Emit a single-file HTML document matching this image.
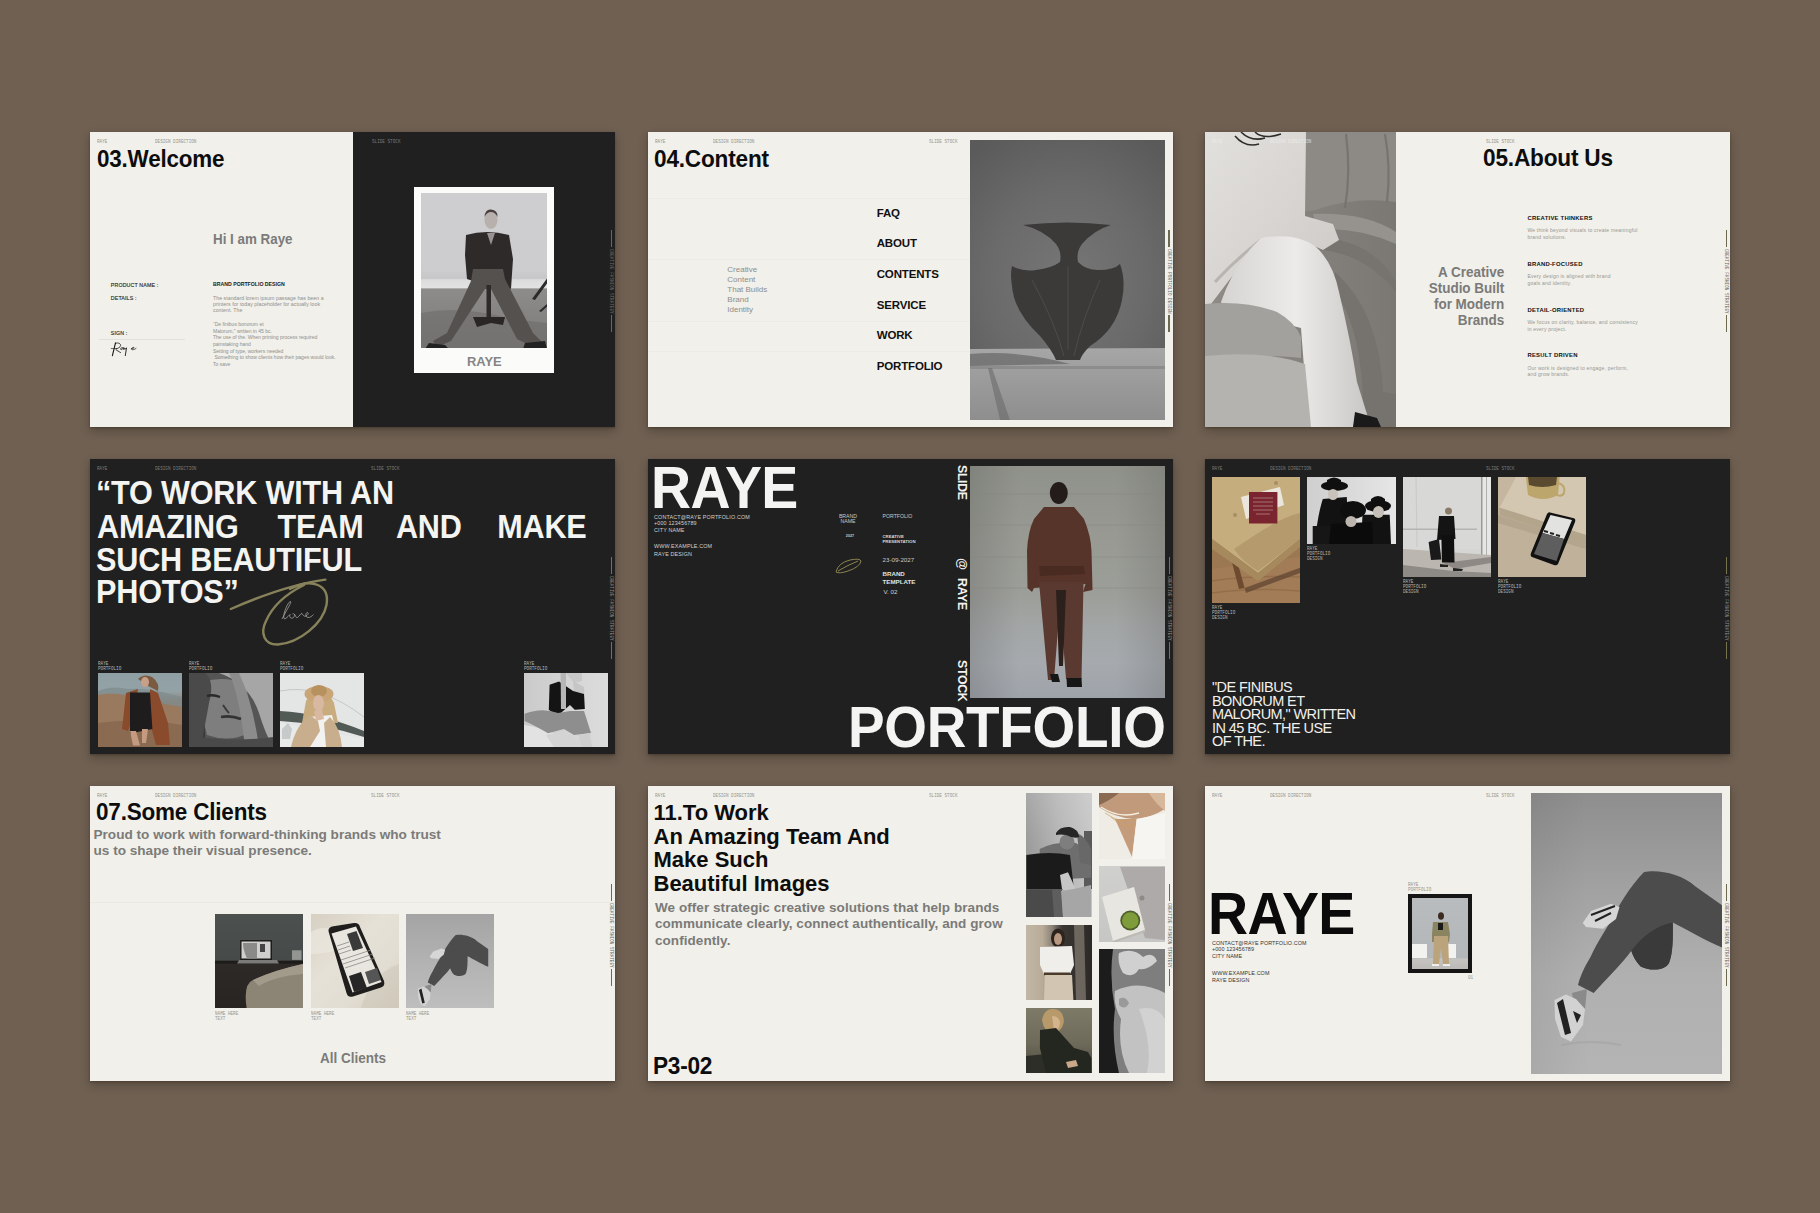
<!DOCTYPE html>
<html><head><meta charset="utf-8">
<style>
html,body{margin:0;padding:0;}
body{width:1820px;height:1213px;background:#6f6052;position:relative;overflow:hidden;font-family:"Liberation Sans",sans-serif;}
.s{position:absolute;width:525px;height:295px;overflow:hidden;box-shadow:0 4px 9px rgba(35,25,15,.32),0 1px 2px rgba(35,25,15,.3);}
.l{background:#f1f0ea;}
.d{background:#202020;}
.a{position:absolute;white-space:nowrap;}
.hd{position:absolute;top:8.2px;font-family:"Liberation Mono",monospace;font-size:5.4px;line-height:5.4px;color:#96968f;transform:scaleX(.8);transform-origin:0 0;}
.d .hd{color:#7a7a76;}
.b{font-weight:bold;}
.cn{transform:scaleX(.945);transform-origin:0 0;}
.ph{position:absolute;overflow:hidden;}
.sb{position:absolute;left:518px;top:98px;width:7px;height:102px;}
.sb i{position:absolute;left:2.7px;width:1.5px;height:17px;background:#77734f;}
.sb span{position:absolute;left:0.3px;top:18.5px;writing-mode:vertical-rl;font-family:"Liberation Mono",monospace;font-size:5.6px;line-height:6px;color:#8a8a86;white-space:nowrap;transform:scaleY(.77);transform-origin:0 0;}
.l .sb i{background:#6d6850;}
.l .sb span{color:#6a6a66;}
</style></head><body>
<!-- SLIDE 1 -->
<div class="s l" style="left:90px;top:132px">
  <div class="hd" style="left:7px">RAYE</div>
  <div class="hd" style="left:65px">DESIGN DIRECTION</div>
  <div class="a b" id="t1" style="left:6.8px;top:14.6px;font-size:24.1px;letter-spacing:-0.2px;line-height:1;color:#0d0d0d;transform:scaleX(.93);transform-origin:0 0">03.Welcome</div>
  <div class="a b" style="left:123px;top:100.4px;font-size:14px;line-height:1;color:#7b7b7b;transform:scaleX(.955);transform-origin:0 0">Hi I am Raye</div>
  <div class="a" style="left:20.8px;top:150.8px;font-size:5.3px;letter-spacing:.12px;line-height:1;color:#2e2e2e;-webkit-text-stroke:.15px #2e2e2e">PRODUCT NAME :</div>
  <div class="a" style="left:20.8px;top:163.9px;font-size:5.3px;letter-spacing:.12px;line-height:1;color:#2e2e2e;-webkit-text-stroke:.15px #2e2e2e">DETAILS :</div>
  <div class="a" style="left:20.8px;top:199.3px;font-size:5.3px;letter-spacing:.12px;line-height:1;color:#2e2e2e;-webkit-text-stroke:.15px #2e2e2e">SIGN :</div>
  <div class="a" style="left:9px;top:207px;width:86px;height:0.5px;background:#e3e1da"></div>
  <svg class="a" style="left:0;top:0" width="60" height="230" viewBox="0 0 60 230"><g fill="none" stroke="#161616" stroke-linecap="round" stroke-linejoin="round">
    <path d="M25.5 210.8 L22.4 223.6" stroke-width="1.1"/>
    <path d="M25.3 211.6 C 27 210.4, 30.5 210.8, 30.6 213.4 C 30.5 215.2, 28 216.6, 25.8 216.9" stroke-width=".8"/>
    <path d="M21.2 216.5 L26.8 216.7" stroke-width=".6"/>
    <path d="M26.3 218 L30.6 220.6" stroke-width=".8"/>
    <path d="M32.6 215.7 C 31 215.2, 30 217.2, 31 217.6 C 32 217.9, 33 216.6, 33.5 215.6 L33.8 217.6" stroke-width=".8"/>
    <path d="M34.1 216 C 34 217.6, 35.6 217.6, 36.5 215.8 L35.3 223.6" stroke-width=".9"/>
    <path d="M41.3 216.9 C 43 216.6, 44.5 216, 44 215.5 C 43 215, 41.4 216, 41.5 217.1 C 42 218.1, 44 217.9, 46 216.5" stroke-width=".7"/>
  </g></svg>
  <div class="a b" style="left:123px;top:149.5px;font-size:5.2px;line-height:1;color:#1a1a1a">BRAND PORTFOLIO DESIGN</div>
  <div class="a" style="left:123px;top:162.8px;font-size:5.2px;letter-spacing:.05px;line-height:6.2px;color:#8f8f8c">The standard lorem ipsum passage has been a<br>printers for today placeholder for actually look<br>content. The</div>
  <div class="a" style="left:123px;top:189.4px;font-size:5px;line-height:6.55px;color:#8f8f8c">“De finibus bonorum et<br>Malorum,” written in 45 bc.<br>The use of the. When printing process required<br>painstaking hand<br>Setting of type, workers needed<br>&nbsp;Something to show clients how their pages would look.<br>To save</div>
  <div class="a d" style="left:263px;top:0;width:262px;height:295px;background:#202020"></div>
  <div class="hd" style="left:282px;color:#7a7a76">SLIDE STOCK</div>
  <div class="a" style="left:324px;top:54.6px;width:140px;height:186px;background:#fbfbfa"></div>
  <div class="ph" style="left:330.7px;top:61.2px;width:126.4px;height:155.3px;background:linear-gradient(180deg,#d2d1d4 0%,#cfced1 50%,#c6c5c8 55%,#dcdcdc 56%,#e2e2e2 61%,#8e8c8b 62%,#7c7a79 100%)">
    <svg width="127" height="156" viewBox="0 0 127 156" preserveAspectRatio="none">
      <rect x="0" y="0" width="127" height="86" fill="#c9c8cb" opacity=".35"/>
      <path d="M0 120 Q40 112 90 126 L127 130 L127 156 L0 156 Z" fill="#6e6c6b" opacity=".6"/>
      <path d="M111 106 L127 84 L127 89 L114 107 Z M118 118 L127 110 L127 113 L120 119 Z" fill="#2c2a2a"/>
      <ellipse cx="70" cy="27" rx="6.5" ry="9" fill="#b8b0ac"/>
      <path d="M63.5 24 Q64 16 70 16.5 Q77 17 76.5 24 Q74 19 70 19 Q66 19 63.5 24 Z" fill="#4a4040"/>
      <path d="M45 42 Q66 36 88 42 L92 66 L90 96 L80 92 L78 78 L56 78 L52 88 L46 86 L44 62 Z" fill="#2e2a2a"/>
      <path d="M66 40 L70 52 L74 40 Z" fill="#9a9290"/>
      <path d="M52 76 L82 76 L84 86 L112 140 L122 150 L110 153 L96 146 L70 96 L64 96 L30 148 L16 154 L12 148 L26 140 L50 88 Z" fill="#55514f"/>
      <rect x="65.5" y="92" width="4.5" height="32" fill="#2e2a2a"/>
      <path d="M52 124 L84 124 L82 132 L70 130 L56 134 Z" fill="#2a2626"/>
      <path d="M8 150 L24 152 L28 156 L4 156 Z M104 150 L124 148 L126 156 L102 156 Z" fill="#222"/>
    </svg>
  </div>
  <div class="a b cn" style="left:376.5px;top:223.4px;font-size:13.7px;line-height:1;color:#858585">RAYE</div>
  <div class="sb"><i style="top:0"></i><span>CREATIVE FASHION STRATEGY</span><i style="top:85px"></i></div>
</div>
<!-- SLIDE 2 -->
<div class="s l" style="left:648px;top:132px">
  <div class="hd" style="left:7px">RAYE</div>
  <div class="hd" style="left:65px">DESIGN DIRECTION</div>
  <div class="hd" style="left:281px">SLIDE STOCK</div>
  <div class="a b" style="left:6.3px;top:15.6px;font-size:23.6px;letter-spacing:-0.2px;line-height:1;color:#0d0d0d;transform:scaleX(.958);transform-origin:0 0">04.Content</div>
  <div class="a" style="left:0;top:66px;width:322px;height:1px;background:#ecebe4"></div>
  <div class="a" style="left:0;top:127px;width:322px;height:1px;background:#ecebe4"></div>
  <div class="a" style="left:0;top:188.5px;width:322px;height:1px;background:#ecebe4"></div>
  <div class="a" style="left:0;top:219px;width:322px;height:1px;background:#ecebe4"></div>
  <div class="a" style="left:79.3px;top:133px;font-size:8px;line-height:9.9px;color:#8e8e8b">Creative<br>Content<br>That Builds<br>Brand<br>Identity</div>
  <div class="a b" style="left:228.7px;top:65.5px;font-size:11.5px;letter-spacing:-0.15px;line-height:30.7px;color:#111">FAQ<br>ABOUT<br>CONTENTS<br>SERVICE<br>WORK<br>PORTFOLIO</div>
  <div class="ph" style="left:322px;top:8px;width:195px;height:279.5px;background:radial-gradient(ellipse 75% 60% at 50% 50%,#767676 0%,#6a6a6a 55%,#5a5a5a 100%)">
    <svg width="195" height="280" viewBox="0 0 195 280">
      <defs><linearGradient id="tb" x1="0" y1="0" x2="0" y2="1"><stop offset="0" stop-color="#a6a6a6"/><stop offset="1" stop-color="#8e8e8e"/></linearGradient></defs>
      <path d="M0 209 L195 208 L195 280 L0 280 Z" fill="url(#tb)"/>
      <path d="M0 226 L195 226 L195 229 L0 229 Z" fill="#7a7a7a" opacity=".5"/>
      <path d="M18 228 L30 280 L40 280 L22 228 Z" fill="#6a6a6a" opacity=".6"/>
      <path d="M0 214 Q50 210 100 224 L0 226 Z" fill="#555" opacity=".55"/>
      <path d="M53 85 Q97 80 141 85 Q124 90 112 104 Q106 112 108 122 Q116 130 128 130 Q144 130 150 124 Q156 140 152 160 Q146 190 120 206 Q112 214 110 220 L86 220 Q82 210 70 196 Q44 172 42 146 Q40 134 42 126 Q52 132 66 130 Q82 128 90 122 Q92 112 86 104 Q74 90 53 85 Z" fill="#3b3a39"/>
      <path d="M62 140 Q84 180 94 216 M130 140 Q112 180 104 216 M98 126 L98 210" stroke="#5a5a58" stroke-width=".8" fill="none" opacity=".7"/>
    </svg>
  </div>
  <div class="sb" style="left:517.5px"><i style="top:0"></i><span>CREATIVE PORTFOLIO DESIGN</span><i style="top:85px"></i></div>
</div>
<!-- SLIDE 3 -->
<div class="s l" style="left:1205px;top:132px">
  <div class="ph" style="left:0;top:0;width:191px;height:295px;background:#86837e">
    <svg width="191" height="295" viewBox="0 0 191 295">
      <defs>
        <linearGradient id="sofa3" x1="0" y1="0" x2="1" y2="0"><stop offset="0" stop-color="#8e8b86"/><stop offset=".5" stop-color="#85827d"/><stop offset="1" stop-color="#7b7873"/></linearGradient>
        <linearGradient id="swt3" x1="0" y1="0" x2="1" y2="1"><stop offset="0" stop-color="#e2e0dd"/><stop offset="1" stop-color="#cdcac6"/></linearGradient>
        <linearGradient id="pnt3" x1="0" y1="0" x2="1" y2="0"><stop offset="0" stop-color="#d6d4d2"/><stop offset=".5" stop-color="#ecebea"/><stop offset="1" stop-color="#c8c6c4"/></linearGradient>
      </defs>
      <rect width="191" height="295" fill="url(#sofa3)"/>
      <path d="M96 0 L191 0 L191 70 Q150 64 110 78 L96 80 Z" fill="#8d8a85"/>
      <path d="M141 2 Q146 40 140 76 M180 2 Q186 36 182 70" stroke="#77746f" stroke-width="2.2" fill="none"/>
      <path d="M108 82 Q160 80 191 100 L191 112 Q150 94 112 98 Z" fill="#96938e"/>
      <path d="M112 104 Q170 110 191 150 L191 160 Q160 122 116 118 Z" fill="#77746f"/>
      <path d="M130 140 Q175 180 178 260 L191 262 L191 295 L158 295 Q160 200 130 160 Z" fill="#76736e"/>
      <path d="M0 0 L101 0 L100 84 L128 92 L134 108 L118 118 L96 108 Q70 116 56 108 Q30 140 6 172 L0 172 Z" fill="url(#swt3)"/>
      <path d="M10 150 Q30 128 56 108" stroke="#b8b5b0" stroke-width="3" fill="none"/>
      <path d="M56 106 Q90 100 110 114 Q128 130 134 160 Q146 210 152 250 L166 295 L104 295 Q100 250 96 196 Q70 190 40 180 Q18 176 16 170 Q30 130 56 106 Z" fill="url(#pnt3)"/>
      <path d="M0 172 Q40 168 72 180 Q90 190 96 205 L96 226 Q60 222 0 226 Z" fill="#a3a19d"/>
      <path d="M0 224 Q60 218 100 232 L106 295 L0 295 Z" fill="#b5b3af"/>
      <path d="M30 4 Q40 16 54 12 M36 0 Q46 10 60 6 M50 0 Q58 8 76 2" stroke="#2e2c2a" stroke-width="1.6" fill="none"/>
      <path d="M150 280 L172 286 L176 295 L148 295 Z" fill="#1a1a1a"/>
    </svg>
  </div>
  <div class="hd" style="left:7px;color:#f2f2f0;opacity:.7">RAYE</div>
  <div class="hd" style="left:65px;color:#f2f2f0;opacity:.7">DESIGN DIRECTION</div>
  <div class="hd" style="left:281px">SLIDE STOCK</div>
  <div class="a b" style="left:278.3px;top:14.9px;font-size:23.6px;letter-spacing:-0.2px;line-height:1;color:#0d0d0d;transform:scaleX(.959);transform-origin:0 0">05.About Us</div>
  <div class="a b" style="left:150px;top:131.7px;width:149.3px;text-align:right;font-size:14.2px;line-height:16.15px;color:#7a7a78;white-space:normal;transform:scaleX(.95);transform-origin:100% 0">A Creative<br>Studio Built<br>for Modern<br>Brands</div>
  <div class="a b" style="left:322.4px;top:83.8px;font-size:5.9px;letter-spacing:.25px;line-height:1;color:#111">CREATIVE THINKERS</div>
  <div class="a" style="left:322.4px;top:95.4px;font-size:5px;letter-spacing:.22px;line-height:6.7px;color:#979794">We think beyond visuals to create meaningful<br>brand solutions.</div>
  <div class="a b" style="left:322.4px;top:129.8px;font-size:5.9px;letter-spacing:.25px;line-height:1;color:#111">BRAND-FOCUSED</div>
  <div class="a" style="left:322.4px;top:141.4px;font-size:5px;letter-spacing:.22px;line-height:6.7px;color:#979794">Every design is aligned with brand<br>goals and identity.</div>
  <div class="a b" style="left:322.4px;top:175.5px;font-size:5.9px;letter-spacing:.25px;line-height:1;color:#111">DETAIL-ORIENTED</div>
  <div class="a" style="left:322.4px;top:187.4px;font-size:5px;letter-spacing:.22px;line-height:6.7px;color:#979794">We focus on clarity, balance, and consistency<br>in every project.</div>
  <div class="a b" style="left:322.4px;top:221px;font-size:5.9px;letter-spacing:.25px;line-height:1;color:#111">RESULT DRIVEN</div>
  <div class="a" style="left:322.4px;top:232.6px;font-size:5px;letter-spacing:.22px;line-height:6.7px;color:#979794">Our work is designed to engage, perform,<br>and grow brands.</div>
  <div class="sb" style="left:518px"><i style="top:0"></i><span>CREATIVE FASHION STRATEGY</span><i style="top:85px"></i></div>
</div>
<!-- SLIDE 4 -->
<div class="s d" style="left:90px;top:459px">
  <div class="hd" style="left:7px">RAYE</div>
  <div class="hd" style="left:65px">DESIGN DIRECTION</div>
  <div class="hd" style="left:281px">SLIDE STOCK</div>
  <div class="a b cn" style="left:6px;top:18.4px;font-size:32.4px;letter-spacing:-0.2px;line-height:1;color:#f4f4f2">“TO WORK WITH AN</div>
  <div class="a b" style="left:6.5px;top:51.6px;width:490px;font-size:32.4px;letter-spacing:-0.2px;line-height:1;color:#f4f4f2;display:flex;justify-content:space-between"><span style="transform:scaleX(.945);transform-origin:0 0">AMAZING</span><span style="transform:scaleX(.945);transform-origin:50% 0">TEAM</span><span style="transform:scaleX(.945);transform-origin:50% 0">AND</span><span style="transform:scaleX(.945);transform-origin:100% 0">MAKE</span></div>
  <div class="a b cn" style="left:6px;top:84.9px;font-size:32.4px;letter-spacing:-0.2px;line-height:1;color:#f4f4f2">SUCH BEAUTIFUL</div>
  <div class="a b cn" style="left:6px;top:117.4px;font-size:32.4px;letter-spacing:-0.2px;line-height:1;color:#f4f4f2">PHOTOS”</div>
  <svg class="a" style="left:130px;top:110px" width="120" height="85" viewBox="0 0 120 85">
    <path d="M10.8 40 C 45 25, 80 14, 105.4 10.6" stroke="#87825a" stroke-width="2.4" fill="none" stroke-linecap="round"/>
    <path d="M70 20 C 92 8, 110 16, 106.5 36 C 103 54, 80 74, 58 75.5 C 44 76, 40 64, 46 52 C 52 38, 64 26, 84 16" stroke="#87825a" stroke-width="2.4" fill="none" stroke-linecap="round"/>
    <path d="M62 50 C 66 42, 72 33, 70.5 32.5 C 68.5 32, 63 44, 63.8 49 C 64.5 51.5, 68 47.5, 70 45.5 C 69 48, 71 50.5, 73.5 48.5 C 75.5 46.5, 74.5 44, 72.5 45 M74.5 45.5 C 76 46, 75.5 49.5, 77.5 48.5 C 79.5 47, 80.5 44.5, 82 44.5 C 83 46, 84 48, 86 47 C 88 46, 89 44, 87.5 43.5 C 85.5 43.5, 85 48, 88 48.5 C 90 48.8, 92 47, 93.5 45.5" stroke="#b4b4b0" stroke-width=".7" fill="none"/>
  </svg>
  <div class="hd" style="left:8px;top:202.9px;color:#b4b4b0">RAYE</div><div class="hd" style="left:8px;top:208px;color:#b4b4b0">PORTFOLIO</div>
  <div class="hd" style="left:99px;top:202.9px;color:#b4b4b0">RAYE</div><div class="hd" style="left:99px;top:208px;color:#b4b4b0">PORTFOLIO</div>
  <div class="hd" style="left:190.4px;top:202.9px;color:#b4b4b0">RAYE</div><div class="hd" style="left:190.4px;top:208px;color:#b4b4b0">PORTFOLIO</div>
  <div class="hd" style="left:433.5px;top:202.9px;color:#b4b4b0">RAYE</div><div class="hd" style="left:433.5px;top:208px;color:#b4b4b0">PORTFOLIO</div>
  <div class="ph" style="left:8px;top:214px;width:84px;height:74px;background:linear-gradient(180deg,#8fa0a5 0%,#93a2a5 25%,#94857a 38%,#9c7c62 55%,#8a6a52 100%)">
    <svg width="84" height="74" viewBox="0 0 84 74">
      <path d="M0 18 Q14 12 30 16 Q50 14 84 24 L84 34 L0 28 Z" fill="#7e8a8c" opacity=".7"/>
      <path d="M0 22 Q20 18 40 26 Q60 30 84 34 L84 74 L0 74 Z" fill="#9a7a5e"/>
      <path d="M0 50 Q40 44 84 52 L84 74 L0 74 Z" fill="#86664c" opacity=".8"/>
      <path d="M40 6 Q46 0 54 4 Q62 10 60 18 L52 14 Z" fill="#7a5a40"/>
      <ellipse cx="47" cy="9" rx="4" ry="5" fill="#c8a088"/>
      <path d="M28 20 L40 16 L36 40 L30 58 L24 56 Z" fill="#8a4a2c"/>
      <path d="M52 16 L60 20 L70 50 L72 72 L58 72 L52 50 Z" fill="#8a4a2c"/>
      <path d="M32 19.6 L52 19.6 L54.4 56 L32 60.4 Z" fill="#1e1c1c"/>
      <path d="M32 58 L38 58 L42 72.5 L35 72.5 Z M44 56 L50 56 L48 70 L44 70 Z" fill="#c49a80"/>
    </svg>
  </div>
  <div class="ph" style="left:99px;top:214px;width:84px;height:74px;background:#555">
    <svg width="84" height="74" viewBox="0 0 84 74">
      <rect x="0" y="0" width="16" height="74" fill="#3a3a3a"/>
      <path d="M14 9 Q36 2 58 12 L60 60 Q40 70 18 62 Q10 36 14 9 Z" fill="#7e7e7e"/>
      <path d="M30 0 Q60 10 70 40 Q76 60 84 74 L84 0 Z" fill="#a6a6a6"/>
      <path d="M40 0 Q50 20 56 74 L70 74 Q64 30 50 0 Z" fill="#8c8c8c"/>
      <path d="M16 0 Q26 8 20 30 L12 74 L0 74 L0 0 Z" fill="#4a4a4a"/>
      <path d="M18 23 Q24 21 31 24" stroke="#2a2a2a" stroke-width="2.4" fill="none"/>
      <path d="M34 32 Q38 38 40 40" stroke="#3a3a3a" stroke-width="2" fill="none"/>
      <path d="M32 44 Q42 42 52 46" stroke="#333" stroke-width="2.6" fill="none"/>
      <path d="M0 62 Q40 70 84 64 L84 74 L0 74 Z" fill="#4a4a4a"/>
    </svg>
  </div>
  <div class="ph" style="left:190.4px;top:214px;width:84px;height:74px;background:#e4e6e6">
    <svg width="84" height="74" viewBox="0 0 84 74">
      <path d="M0 18 Q40 10 84 44" stroke="#c4c8c6" stroke-width="1" fill="none"/>
      <path d="M0 38 Q40 40 84 58 L84 64 Q40 50 0 48 Z" fill="#525a56"/>
      <path d="M0 50 L84 66 L84 74 L0 74 Z" fill="#e8eaea"/>
      <path d="M2 56 L8 50 L12 56 L10 66 L2 66 Z" fill="#b8bcbc" opacity=".7"/>
      <path d="M26 28 Q30 20 40 21 Q52 22 54 30 L58 50 L22 50 Z" fill="#c9ac7e"/>
      <ellipse cx="39" cy="21" rx="14.5" ry="8" fill="#c9a578"/>
      <ellipse cx="39" cy="18" rx="8" ry="6" fill="#b8925e"/>
      <ellipse cx="38.5" cy="30" rx="5.5" ry="8" fill="#d8b8a0"/>
      <path d="M28 44 L52 42 L60 74 L24 74 Z" fill="#f2f2f0"/>
      <path d="M11 74 Q16 52 30 42 L38 48 L40 58 L30 74 Z" fill="#c8ae8c"/>
      <path d="M62 74 Q60 54 50 44 L44 50 L46 74 Z" fill="#c8ae8c"/>
      <path d="M34 38 L42 36 L44 46 L36 48 Z" fill="#d8b8a0"/>
    </svg>
  </div>
  <div class="ph" style="left:433.5px;top:214px;width:84px;height:74px;background:linear-gradient(90deg,#cacaca 0%,#d6d6d6 60%,#dcdcdc 100%)">
    <svg width="84" height="74" viewBox="0 0 84 74">
      <path d="M0 52 Q30 56 50 74 L0 74 Z" fill="#e2e2e2"/>
      <path d="M42 0 L58 0 L58 8 L50 10 Z" fill="#c8c8c8"/>
      <path d="M49 8 L60 14 L61 36 L51 37 Z" fill="#c6c6c6"/>
      <path d="M25.6 11.7 L35 8.6 L49.1 18 L60 21.1 L60.8 36 L50.7 36.8 L46 32 L33.4 43 L24.8 36.8 Z" fill="#141414"/>
      <path d="M36.6 0 L42 0 L42 36 L37 36 Z" fill="#b6b6b6"/>
      <path d="M0.5 40.7 Q18 34 34 40 L46 38 L60 38 L67 60 L50 62 L40 56 L24 60.3 Q10 52 0.5 48 Z" fill="#8e8e8e"/>
      <path d="M22 62 L40 58 L58 70 L62 74 L30 74 Z" fill="#d4d4d4"/>
      <path d="M54 62 L66 60 L68 74 L58 74 Z" fill="#cfcfcf"/>
    </svg>
  </div>
  <div class="sb"><i style="top:0"></i><span>CREATIVE FASHION STRATEGY</span><i style="top:85px"></i></div>
</div>
<!-- SLIDE 5 -->
<div class="s d" style="left:648px;top:459px">
  <div class="a b cn" style="left:2.5px;top:-0.4px;font-size:58.7px;letter-spacing:-0.6px;line-height:1;color:#f4f4f2">RAYE</div>
  <div class="a" style="left:6px;top:54.5px;font-size:5.4px;letter-spacing:.15px;line-height:6.5px;color:#d2d2d0">CONTACT@RAYE PORTFOLIO.COM<br>+000 123456789<br>CITY NAME</div>
  <div class="a" style="left:6px;top:84.3px;font-size:5.4px;letter-spacing:.15px;line-height:7.8px;color:#d2d2d0">WWW.EXAMPLE.COM<br>RAYE DESIGN</div>
  <div class="a" style="left:180px;top:55px;width:40px;text-align:center;font-size:5.2px;line-height:5px;color:#c8c8c6">BRAND<br>NAME</div>
  <div class="a b" style="left:180px;top:76px;width:44px;text-align:center;font-size:3.8px;line-height:1;color:#c8c8c6">2027</div>
  <svg class="a" style="left:186px;top:98px" width="30" height="18" viewBox="0 0 30 18">
    <path d="M2 15 Q4 6 16 3 Q26 1 27 4 Q26 10 14 14 Q5 17 2 15 Z M4 14 Q14 8 24 4" stroke="#8c8450" stroke-width="1" fill="none"/>
  </svg>
  <div class="a" style="left:234.5px;top:55.3px;font-size:5.2px;line-height:1;color:#c8c8c6">PORTFOLIO</div>
  <div class="a b" style="left:234.5px;top:74.8px;font-size:4.3px;line-height:5.4px;color:#d8d8d6">CREATIVE<br>PRESENTATION</div>
  <div class="a" style="left:234.5px;top:98.4px;font-size:6.2px;line-height:1;color:#c8c8c6">23-09-2027</div>
  <div class="a b" style="left:234.5px;top:111.3px;font-size:6.2px;line-height:7.5px;color:#e0e0de">BRAND<br>TEMPLATE</div>
  <div class="a" style="left:235.5px;top:129.5px;font-size:6.2px;line-height:1;color:#d0d0ce">V. 02</div>
  <div class="a b" style="left:305.5px;top:6px;writing-mode:vertical-rl;font-size:12.3px;letter-spacing:-0.3px;line-height:15px;color:#f2f2f0">SLIDE</div>
  <div class="a b" style="left:305.5px;top:98.5px;writing-mode:vertical-rl;font-size:12.3px;letter-spacing:-0.3px;line-height:15px;color:#f2f2f0">@</div>
  <div class="a b" style="left:305.5px;top:118.5px;writing-mode:vertical-rl;font-size:12.3px;letter-spacing:-0.3px;line-height:15px;color:#f2f2f0">RAYE</div>
  <div class="a b" style="left:305.5px;top:201px;writing-mode:vertical-rl;font-size:12.3px;letter-spacing:-0.3px;line-height:15px;color:#f2f2f0">STOCK</div>
  <div class="ph" style="left:322.2px;top:7.2px;width:194.7px;height:232.2px;background:linear-gradient(180deg,#8f928a 0%,#979992 30%,#9c9e99 55%,#a3a6a6 70%,#a6aaae 85%,#9ea3aa 100%)">
    <svg width="195" height="233" viewBox="0 0 195 233">
      <defs><linearGradient id="vig5" x1="0" y1="0" x2="1" y2="0"><stop offset="0" stop-color="#555" stop-opacity=".25"/><stop offset=".25" stop-color="#555" stop-opacity="0"/><stop offset=".75" stop-color="#555" stop-opacity="0"/><stop offset="1" stop-color="#555" stop-opacity=".22"/></linearGradient></defs>
      <rect x="0" y="0" width="195" height="233" fill="url(#vig5)"/>
      <path d="M0 28 L195 28 M0 59 L195 59 M0 91 L195 91 M0 122 L195 122" stroke="#868980" stroke-width=".8" opacity=".6"/>
      <ellipse cx="88.8" cy="27" rx="9" ry="11" fill="#231c1a"/>
      <path d="M74 41 L104 41 L114 53 Q121 70 121.5 85 L122.5 124 L113 126 L115.5 118 L64 122 L62 126 L57.5 122 L57 85 Q58 65 64 53 Z" fill="#57342a"/>
      <path d="M69 100 L114 100 L115 108 L70 110 Z" fill="#4a2b22"/>
      <path d="M69 116 L113.5 116 L111.5 213 L96 213 L91 150 L89 150 L84 214 L78 214 Z" fill="#5a3a30"/>
      <path d="M86 124 L96 124 L93 200 L89 200 Z" fill="#2c201d"/>
      <path d="M96.5 212 L111.5 212 L112 221 L97 221 Z M80 208 L88 208 L90 216 L82 216 Z" fill="#161616"/>
    </svg>
  </div>
  <div class="a b cn" id="port" style="left:200px;top:239.2px;font-size:58.1px;letter-spacing:-0.3px;line-height:1;color:#f4f4f2">PORTFOLIO</div>
  <div class="sb" style="left:518px"><i style="top:0"></i><span>CREATIVE FASHION STRATEGY</span><i style="top:85px"></i></div>
</div>
<!-- SLIDE 6 -->
<div class="s d" style="left:1205px;top:459px">
  <div class="hd" style="left:7px">RAYE</div>
  <div class="hd" style="left:65px">DESIGN DIRECTION</div>
  <div class="hd" style="left:281px">SLIDE STOCK</div>
  <div class="ph" style="left:7px;top:18.2px;width:88px;height:125.4px;background:#9c7852">
    <svg width="88" height="126" viewBox="0 0 88 126">
      <path d="M0 92 L88 80 L88 126 L0 126 Z" fill="#a27c56"/>
      <path d="M0 104 Q40 98 88 100 M0 116 Q40 110 88 114" stroke="#8a6644" stroke-width="1.5" fill="none" opacity=".6"/>
      <path d="M32.6 111 L88 90.7 L88 96 L34 116 Z" fill="#5c4230" opacity=".7"/>
      <path d="M18.7 80.6 L24 80 L32.6 110.9 L27 112 Z" fill="#6e4a2e"/>
      <path d="M0 0 L88 0 L88 62 L46 96 L0 62 Z" fill="#c5ad7e"/>
      <path d="M0 62 L46 96 L88 62 L88 70 L46 104 L0 72 Z" fill="#a68a5e"/>
      <path d="M40 60 Q70 40 88 36 L88 62 L46 94 Q30 84 22 72 Z" fill="#ad9266" opacity=".7"/>
      <circle cx="23" cy="38" r="2" fill="#a88e62"/><circle cx="64" cy="6" r="2" fill="#a88e62"/>
      <path d="M29 20 L68 10 L72 28 L34 42 Z" fill="#ebe6dc"/>
      <path d="M37 15 L65.4 15 L65.4 46.5 L37 46.5 Z" fill="#7a2430"/>
      <path d="M41 21 L61 21 M41 25 L61 25 M41 29 L61 29 M41 33 L61 33 M44 37 L58 37" stroke="#c8a8a0" stroke-width=".6"/>
    </svg>
  </div>
  <div class="hd" style="left:7px;top:147.4px;color:#b4b4b0">RAYE</div><div class="hd" style="left:7px;top:152.3px;color:#b4b4b0">PORTFOLIO</div><div class="hd" style="left:7px;top:157.2px;color:#b4b4b0">DESIGN</div>
  <div class="ph" style="left:102.3px;top:18.2px;width:88.7px;height:66.9px;background:linear-gradient(90deg,#cfcfcf 0%,#dcdcdc 60%,#e6e6e6 100%)">
    <svg width="89" height="67" viewBox="0 0 89 67">
      <path d="M15.8 22 L39.8 20 L42 67 L8 67 Q10 40 15.8 22 Z" fill="#121212"/>
      <ellipse cx="27.5" cy="9" rx="13.5" ry="5" fill="#0f0f0f"/>
      <path d="M20 3 Q27 -2 34 3 L34 10 L20 10 Z" fill="#0f0f0f"/>
      <ellipse cx="26" cy="17.5" rx="5" ry="5.5" fill="#c9c2ba"/>
      <path d="M5.7 49 L24.6 49 L24.6 67 L5.7 67 Z" fill="#161616"/>
      <path d="M55.5 37.7 L82.7 37.7 L84 67 L54 67 Z" fill="#121212"/>
      <ellipse cx="71" cy="29" rx="13" ry="6" fill="#0f0f0f"/>
      <path d="M64 22 Q71 16 78 22 L78 30 L64 30 Z" fill="#0f0f0f"/>
      <ellipse cx="71.5" cy="35" rx="5.5" ry="6" fill="#c6bfb7"/>
      <path d="M24 47 L65 45 L66 67 L22 67 Z" fill="#0b0b0b"/>
      <ellipse cx="46" cy="33" rx="13" ry="9" fill="#0e0e0e"/>
      <ellipse cx="44" cy="44.5" rx="5.5" ry="5.5" fill="#bdb6ae"/>
    </svg>
  </div>
  <div class="hd" style="left:102px;top:88.2px;color:#b4b4b0">RAYE</div><div class="hd" style="left:102px;top:93.4px;color:#b4b4b0">PORTFOLIO</div><div class="hd" style="left:102px;top:98.3px;color:#b4b4b0">DESIGN</div>
  <div class="ph" style="left:198px;top:18.2px;width:87.8px;height:99.6px;background:#d5d5d3">
    <svg width="88" height="100" viewBox="0 0 88 100">
      <rect x="0" y="0" width="88" height="72" fill="#d8d8d6"/>
      <path d="M13 0 L14 70" stroke="#c4c4c2" stroke-width=".8"/>
      <rect x="79" y="0" width="9" height="84" fill="#e6e6e4"/>
      <rect x="78" y="0" width="1.5" height="84" fill="#9a9a98"/>
      <rect x="83" y="0" width="1" height="84" fill="#b0b0ae"/>
      <rect x="0" y="51.5" width="74" height="1.5" fill="#b4b4b2"/>
      <path d="M0 72 L88 78 L88 100 L0 100 Z" fill="#bcb6b0"/>
      <path d="M0 88 L50 94 L88 96 L88 100 L0 100 Z" fill="#8e8a86"/>
      <path d="M40 86 L88 80 L88 86 L52 92 Z" fill="#7a7672" opacity=".7"/>
      <ellipse cx="45.5" cy="34" rx="3.5" ry="3.5" fill="#8a7a68"/>
      <path d="M36 39 L51 39 L52.5 62 L34 63 Z" fill="#141414"/>
      <path d="M38.3 58 L51 58 L51.5 85.5 L39 85.5 Z" fill="#101010"/>
      <path d="M25.6 65 L36 62 L38.3 82.4 L28 83 Z" fill="#1a1a1a"/>
      <path d="M37 87 L45 88 L45 90 L37 90 Z M50 91 L60 92 L59 94 L50 94 Z" fill="#222"/>
    </svg>
  </div>
  <div class="hd" style="left:197.6px;top:120.8px;color:#b4b4b0">RAYE</div><div class="hd" style="left:197.6px;top:126px;color:#b4b4b0">PORTFOLIO</div><div class="hd" style="left:197.6px;top:130.8px;color:#b4b4b0">DESIGN</div>
  <div class="ph" style="left:292.8px;top:18.2px;width:88px;height:99.6px;background:#bfb19a">
    <svg width="88" height="100" viewBox="0 0 88 100">
      <path d="M0 0 L88 0 L88 58 L1.5 30.7 L0 28 Z" fill="#d3c7b2"/>
      <path d="M1.5 30.7 L88 58 L88 66 L2 38 Z" fill="#b3a58c"/>
      <path d="M0 38 L88 66 L88 72 L0 46 Z" fill="#a89a82" opacity=".5"/>
      <path d="M0 0 L18 0 L1.5 30.7 L0 30 Z" fill="#c4b69f"/>
      <path d="M27.9 0 L61.6 0 L60 18 Q45 26 30 18 Z" fill="#bda66c"/>
      <path d="M30 0 L59 0 L58 8 Q44 12 31 8 Z" fill="#5a4a30"/>
      <path d="M60 6 Q68 8 66 16 Q64 20 59 18" stroke="#bda66c" stroke-width="2" fill="none"/>
      <path d="M52 35.4 L75.9 41.2 Q78 42 77 45 L60 87 Q58.5 89 56 88 L34 80 Q32 79 33 76 L49 37 Q50 35 52 35.4 Z" fill="#111"/>
      <path d="M52.5 38 L74 43 L66 62 L44.5 56 Z" fill="#e2e2e0"/>
      <path d="M44.5 56 L66 62 L58.5 84 L36 77 Z" fill="#5e5e5e"/>
      <path d="M46 54 L50 55 M52 56 L56 57 M58 58 L62 59" stroke="#222" stroke-width="2"/>
    </svg>
  </div>
  <div class="hd" style="left:292.8px;top:120.8px;color:#b4b4b0">RAYE</div><div class="hd" style="left:292.8px;top:126px;color:#b4b4b0">PORTFOLIO</div><div class="hd" style="left:292.8px;top:130.8px;color:#b4b4b0">DESIGN</div>
  <div class="a" style="left:7px;top:222px;font-size:14.5px;letter-spacing:-0.58px;line-height:13.55px;color:#f0f0ee">"DE FINIBUS<br>BONORUM ET<br>MALORUM," WRITTEN<br>IN 45 BC. THE USE<br>OF THE.</div>
  <div class="sb"><i style="top:0"></i><span>CREATIVE FASHION STRATEGY</span><i style="top:85px"></i></div>
</div>
<!-- SLIDE 7 -->
<div class="s l" style="left:90px;top:786px">
  <div class="hd" style="left:7px">RAYE</div>
  <div class="hd" style="left:65px">DESIGN DIRECTION</div>
  <div class="hd" style="left:281px">SLIDE STOCK</div>
  <div class="a b" style="left:6px;top:15.4px;font-size:23px;letter-spacing:-0.2px;line-height:1;color:#0d0d0d;transform:scaleX(.978);transform-origin:0 0">07.Some Clients</div>
  <div class="a b" style="left:3.5px;top:40.6px;font-size:13.6px;line-height:16.1px;color:#7b7b79">Proud to work with forward-thinking brands who trust<br>us to shape their visual presence.</div>
  <div class="a" style="left:0;top:116px;width:525px;height:1px;background:#eae8e1"></div>
  <div class="ph" style="left:125.2px;top:128px;width:88.2px;height:93.8px;background:linear-gradient(180deg,#4c504e 0%,#464a48 50%,#2e2a28 51%,#282422 100%)">
    <svg width="89" height="94" viewBox="0 0 89 94">
      <rect x="0" y="46.7" width="89" height="3" fill="#1e1c1a"/>
      <path d="M25.2 26 L57 26 L57 46 L25.2 46 Z" fill="#1c1c1c"/>
      <path d="M26.5 27.5 L55.5 27.5 L55.5 44.5 L26.5 44.5 Z" fill="#cfcfcd"/>
      <path d="M28 29 L42 29 L42 44.5 L32 44.5 Q28 36 28 29 Z" fill="#8a8a88"/>
      <path d="M45 30 L50 30 L50 38 L45 38 Z" fill="#444"/>
      <path d="M24 46 L62 46 L64 49.5 L22 49.5 Z" fill="#7a7a78"/>
      <rect x="77" y="36.3" width="9.5" height="9.6" fill="#a6a8a4" opacity=".8"/>
      <path d="M31.6 94 Q28 70 38 66 Q60 56 88.2 50 L88.2 94 Z" fill="#8c8474"/>
      <path d="M38 66 Q60 56 88.2 50 L88.2 60 Q60 62 44 72 Z" fill="#a29a8a"/>
    </svg>
  </div>
  <div class="ph" style="left:221px;top:128px;width:87.6px;height:93.8px;background:linear-gradient(135deg,#d6cfc2 0%,#e6e1d6 40%,#e2ddd2 70%,#d0c9bc 100%)">
    <svg width="88" height="94" viewBox="0 0 88 94">
      <path d="M0 18 Q20 6 40 30 Q20 40 0 40 Z" fill="#ece8df" opacity=".7"/>
      <path d="M50 94 Q60 60 88 50 L88 94 Z" fill="#cfc8ba" opacity=".6"/>
      <path d="M18 19 Q16 14 21 12.5 L43 9 Q48 8.5 49 13 L73 67 Q74.5 72 70 73.5 L42 82.5 Q37 84 35.5 79 Z" fill="#1f1e1c"/>
      <path d="M20.5 19.5 L45 12.5 L70.5 68 L41.5 78.5 Z" fill="#e9e6df"/>
      <path d="M36 20 L45.5 17 L52 34 L42 37 Z" fill="#3a3a3a"/>
      <path d="M38 62 L50 58 L56 74 L43 78 Z" fill="#262626"/>
      <path d="M54 58 L66 54 L70 66 L58 70 Z" fill="#555"/>
      <path d="M26 32 L38 28 M27 36 L39 32 M28 40 L40 36 M30 46 L60 36 M32 50 L62 40 M34 54 L64 44" stroke="#8a8a88" stroke-width=".8"/>
    </svg>
  </div>
  <div class="ph" style="left:316px;top:128px;width:87.8px;height:93.8px;background:linear-gradient(180deg,#a4a4a4 0%,#b2b2b2 50%,#bebebe 100%)">
    <svg width="88" height="94" viewBox="0 0 88 94">
      <g transform="translate(2,-12.1) scale(0.42)">
      <path d="M112.8 79.3 C 125 76, 150 80, 164.5 93.4 L 191 112.2 L 191 154.5 C 175 148, 155 136, 141.8 129.5 C 142 145, 142 160, 138 170 C 134 178, 118 178, 109.7 173.4 C 104 168, 101 160, 100.3 157.7 C 92 170, 75 186, 62.7 200 L 47 192 C 50 180, 56 170, 59.5 164 C 66 150, 75 136, 80 128 C 86 115, 100 92, 112.8 79.3 Z" fill="#4c4c4c"/>
      <path d="M51.7 130 L60 118 L80 110.7 L88.5 114 L85 126 L72 135.7 L55 134 Z" fill="#d6d6d6"/>
      <path d="M41 200 L56 196 L54 216 L44 220 Z" fill="#8a8a8a"/>
      <path d="M23.5 207 L35 201.6 L45 206 L54 216 L52 232 L40 248.6 L30 244 L24 226 Z" fill="#d2d2d2"/>
      <path d="M26 210 L32 206 L40 240 L34 242 Z" fill="#222"/>
      </g>
    </svg>
  </div>
  <div class="hd" style="left:125.2px;top:225.5px">NAME HERE</div><div class="hd" style="left:125.2px;top:230.8px">TEXT</div>
  <div class="hd" style="left:221px;top:225.5px">NAME HERE</div><div class="hd" style="left:221px;top:230.8px">TEXT</div>
  <div class="hd" style="left:316px;top:225.5px">NAME HERE</div><div class="hd" style="left:316px;top:230.8px">TEXT</div>
  <div class="a b" style="left:162.7px;top:264.1px;width:200px;text-align:center;font-size:15.2px;line-height:1;color:#7b7b79;transform:scaleX(.89);transform-origin:50% 0">All Clients</div>
  <div class="sb"><i style="top:0"></i><span>CREATIVE FASHION STRATEGY</span><i style="top:85px"></i></div>
</div>
<!-- SLIDE 8 -->
<div class="s l" style="left:648px;top:786px">
  <div class="hd" style="left:7px">RAYE</div>
  <div class="hd" style="left:65px">DESIGN DIRECTION</div>
  <div class="hd" style="left:281px">SLIDE STOCK</div>
  <div class="a b" style="left:5.5px;top:15px;font-size:22px;letter-spacing:0px;line-height:23.6px;color:#0d0d0d">11.To Work<br>An Amazing Team And<br>Make Such<br>Beautiful Images</div>
  <div class="a b" style="left:7px;top:113.7px;font-size:13.5px;letter-spacing:.06px;line-height:16.45px;color:#7a7a78">We offer strategic creative solutions that help brands<br>communicate clearly, connect authentically, and grow<br>confidently.</div>
  <div class="a b" style="left:5.3px;top:268.6px;font-size:23.4px;letter-spacing:-0.3px;line-height:1;color:#0d0d0d;transform:scaleX(.97);transform-origin:0 0">P3-02</div>
  <div class="ph" style="left:378.4px;top:7.2px;width:65.2px;height:124px;background:linear-gradient(180deg,rgba(255,255,255,.14),rgba(255,255,255,0) 45%),linear-gradient(90deg,#9a9a9a 0%,#b4b4b4 50%,#c6c6c6 100%)">
    <svg width="66" height="124" viewBox="0 0 66 124">
      <path d="M58 38 L66 38 L66 96 L58 96 Z" fill="#5a5a5a"/>
      <path d="M13.7 56 Q30 48 50 50 L65 60 L65 84.7 L40 86 L13.7 70 Z" fill="#6e6e6e"/>
      <path d="M51 40 Q60 44 65 56 L65 72 L54 70 Z" fill="#686868"/>
      <ellipse cx="41" cy="49" rx="7.5" ry="7.5" fill="#7e7e7e"/>
      <path d="M30 40 Q34 33 44 34 Q52 36 53.3 44 Q48 46 40 42 Q34 41 30 42 Z" fill="#262626"/>
      <path d="M0.3 62 Q24 58 44 62 L48 96.4 L0.3 96.4 Z" fill="#1b1b1b"/>
      <path d="M34 82 L42 79.3 L51 99 L44 101.8 L36 96 Z" fill="#c6c6c6"/>
      <path d="M0 96.4 L35 96.4 L35 124 L0 124 Z" fill="#4a4a4a"/>
      <path d="M26 96.4 L36 96.4 L37 124 L28 124 Z" fill="#5e5e5e"/>
      <path d="M35 98 Q50 96 65 92 L65 124 L37 124 Z" fill="#a6a6a6"/>
    </svg>
  </div>
  <div class="ph" style="left:378.4px;top:139.3px;width:65.2px;height:75px;background:linear-gradient(90deg,#c2b6a6 0%,#b8ab98 25%,#8a8076 40%,#3a3632 55%,#2c2a28 100%)">
    <svg width="66" height="75" viewBox="0 0 66 75">
      <path d="M48 0 L58 0 L60 75 L50 75 Z" fill="#a89e92" opacity=".5"/>
      <ellipse cx="32" cy="13" rx="7" ry="9.5" fill="#2e241e"/>
      <ellipse cx="32" cy="14" rx="4" ry="6" fill="#b89880"/>
      <path d="M14 22 L46 21 L48 40 L44 49 L18 49 L14 40 Z" fill="#f0eeea"/>
      <rect x="18" y="47.5" width="26" height="3" fill="#4a3a2a"/>
      <path d="M18.7 50 L46 50 L47.4 75 L18 75 Z" fill="#d2c6b2"/>
    </svg>
  </div>
  <div class="ph" style="left:378.4px;top:222px;width:65.2px;height:65px;background:linear-gradient(180deg,#7e7a68 0%,#6e6a5a 55%,#4a4a40 100%)">
    <svg width="66" height="65" viewBox="0 0 66 65">
      <path d="M0 48 L20 46 L22 65 L0 65 Z" fill="#2e2e28"/>
      <path d="M16 12 Q18 0 28 1 Q38 2 37.8 14 Q36 24 26 26 Q18 24 16 12 Z" fill="#b89a6a"/>
      <path d="M26 8 Q34 8 34 16 Q33 22 28 22 Z" fill="#d4b48c"/>
      <path d="M14 22 L30 20 L48 40 L62 44 L65.3 50 L65.3 65 L20 65 L13.9 40 Z" fill="#242620"/>
      <path d="M40 54 L50 52 L52 58 L42 60 Z" fill="#c8a888"/>
    </svg>
  </div>
  <div class="ph" style="left:451.4px;top:7.2px;width:65.5px;height:65.5px;background:#efebe5">
    <svg width="66" height="66" viewBox="0 0 66 66">
      <path d="M0 0 L66 0 L66 16 Q50 26 34 26 Q14 24 0 14 Z" fill="#c09a7a"/>
      <path d="M0 0 L20 0 Q10 8 0 12 Z" fill="#8a6a52"/>
      <path d="M50 0 L66 0 L66 18 Q56 10 50 0 Z" fill="#d8b89a"/>
      <path d="M16 25.9 L37.7 25.9 L33 64 Z" fill="#c49c7c"/>
      <path d="M2 14 Q20 26 40 20" stroke="#f4eee0" stroke-width="1.4" fill="none"/>
      <path d="M6 20 Q22 32 38 26 M12 24 Q24 36 36 32" stroke="#c8a060" stroke-width=".7" fill="none"/>
      <path d="M37.7 26 L66 20 L66 66 L33 66 Z" fill="#f7f5f2"/>
    </svg>
  </div>
  <div class="ph" style="left:451.4px;top:80.2px;width:65.5px;height:75.6px;background:linear-gradient(180deg,#d0d0ce 0%,#c6c6c4 100%)">
    <svg width="66" height="76" viewBox="0 0 66 76">
      <path d="M21 0.7 L66 0.7 L66 74 L46 72 Z" fill="#aeaaa9"/>
      <circle cx="43" cy="32" r="2.5" fill="#8e8a89"/>
      <path d="M3 31 L35 21 L46 64 L14 75 Z" fill="#e8e6e0"/>
      <path d="M14 75 L46 64 L46.5 66 L14.5 77 Z" fill="#bdbab4"/>
      <circle cx="31.3" cy="54.5" r="10" fill="#4e5e2a"/>
      <circle cx="31.3" cy="54.5" r="8.3" fill="#7f9c3a"/>
    </svg>
  </div>
  <div class="ph" style="left:451.4px;top:163.3px;width:65.5px;height:123.7px;background:#1c1c1c">
    <svg width="66" height="124" viewBox="0 0 66 124">
      <path d="M14 0 L66 0 L66 124 L20 124 Q12 90 16 60 Q10 30 14 0 Z" fill="#7e7e7e"/>
      <path d="M16 42 Q40 30 66 44 L66 124 L30 124 Q18 100 22 70 Q14 56 16 42 Z" fill="#c2c2c2"/>
      <path d="M40 60 Q58 56 66 70 L66 124 L48 124 Q54 96 40 60 Z" fill="#d2d2d2"/>
      <path d="M20 4 Q34 -2 44 8 Q54 2 58 12 Q48 22 40 20 Q34 30 24 24 Q18 14 20 4 Z" fill="#d0d0d0"/>
      <path d="M20 50 Q26 46 30 54 Q26 62 20 56 Z" fill="#9a9a9a"/>
    </svg>
  </div>
  <div class="sb" style="left:518px"><i style="top:0"></i><span>CREATIVE FASHION STRATEGY</span><i style="top:85px"></i></div>
</div>
<!-- SLIDE 9 -->
<div class="s l" style="left:1205px;top:786px">
  <div class="hd" style="left:7px">RAYE</div>
  <div class="hd" style="left:65px">DESIGN DIRECTION</div>
  <div class="hd" style="left:281px">SLIDE STOCK</div>
  <div class="a b cn" style="left:3px;top:98.6px;font-size:58.7px;letter-spacing:-0.6px;line-height:1;color:#0b0b0b">RAYE</div>
  <div class="a" style="left:7px;top:153.7px;font-size:5.4px;letter-spacing:.1px;line-height:6.6px;color:#333">CONTACT@RAYE PORTFOLIO.COM<br>+000 123456789<br>CITY NAME</div>
  <div class="a" style="left:7px;top:183.7px;font-size:5.4px;letter-spacing:.1px;line-height:7.8px;color:#333">WWW.EXAMPLE.COM<br>RAYE DESIGN</div>
  <div class="hd" style="left:203px;top:97px">RAYE</div><div class="hd" style="left:203px;top:102.2px">PORTFOLIO</div>
  <div class="a" style="left:202.8px;top:108.2px;width:64px;height:78.8px;background:#151515"></div>
  <div class="ph" style="left:207px;top:112px;width:55.5px;height:71px;background:linear-gradient(180deg,#b9bcbf 0%,#b4b7ba 84%,#c6c4c0 86%,#bcbab6 100%)">
    <svg width="56" height="71" viewBox="0 0 56 71">
      <rect x="0" y="46" width="15" height="14" fill="#f2f2f0"/>
      <rect x="33" y="46" width="11" height="14" fill="#f2f2f0"/>
      <ellipse cx="29" cy="18" rx="3" ry="3.8" fill="#3a2a20"/>
      <path d="M21 24 L36 24 L38 36 L37 44 L20 44 L20 36 Z" fill="#8a8460"/>
      <rect x="26" y="25" width="5" height="7" fill="#1a1a1a"/>
      <path d="M22 38 L36 38 L37 66 L31 66 L29 50 L27 66 L21 66 Z" fill="#bba47c"/>
      <path d="M20 66 L27 66 L27 68 L20 68 Z M31 66 L38 66 L38 68 L31 68 Z" fill="#eee"/>
    </svg>
  </div>
  <div class="hd" style="left:262.5px;top:190.4px">01</div>
  <div class="ph" style="left:326px;top:7.2px;width:191px;height:280.4px;background:linear-gradient(90deg,rgba(0,0,0,.06),rgba(0,0,0,0) 30%),linear-gradient(180deg,#8e8e8e 0%,#a2a2a2 35%,#b0b0b0 65%,#b4b4b4 100%)">
    <svg width="191" height="281" viewBox="0 0 191 281">
      <path d="M112.8 79.3 C 125 76, 150 80, 164.5 93.4 L 191 112.2 L 191 154.5 C 175 148, 155 136, 141.8 129.5 C 142 145, 142 160, 138 170 C 134 178, 118 178, 109.7 173.4 C 104 168, 101 160, 100.3 157.7 C 92 170, 75 186, 62.7 200 L 47 192 C 50 180, 56 170, 59.5 164 C 66 150, 75 136, 80 128 C 86 115, 100 92, 112.8 79.3 Z" fill="#4c4c4c"/>
      <path d="M141.8 129.5 C 142 145, 142 160, 138 170 C 134 178, 118 178, 109.7 173.4 C 104 168, 101 160, 100.3 157.7 C 110 145, 125 132, 141.8 129.5 Z" fill="#3a3a3a"/>
      <path d="M51.7 130 L60 118 L80 110.7 L88.5 114 L85 126 L72 135.7 L55 134 Z" fill="#d6d6d6"/>
      <path d="M60 122 L84 113 M64 128 L80 120" stroke="#222" stroke-width="2"/>
      <path d="M41 200 L56 196 L54 216 L44 220 Z" fill="#8a8a8a"/>
      <path d="M23.5 207 L35 201.6 L45 206 L54 216 L52 232 L40 248.6 L30 244 L24 226 Z" fill="#d2d2d2"/>
      <path d="M26 210 L32 206 L40 240 L34 242 Z M42 218 L50 222 L46 230 Z" fill="#222"/>
      <path d="M30 252 Q60 246 90 252" stroke="#a0a0a0" stroke-width="2" fill="none" opacity=".5"/>
    </svg>
  </div>
  <div class="sb" style="left:518px"><i style="top:0"></i><span>CREATIVE FASHION STRATEGY</span><i style="top:85px"></i></div>
</div>
</body></html>
